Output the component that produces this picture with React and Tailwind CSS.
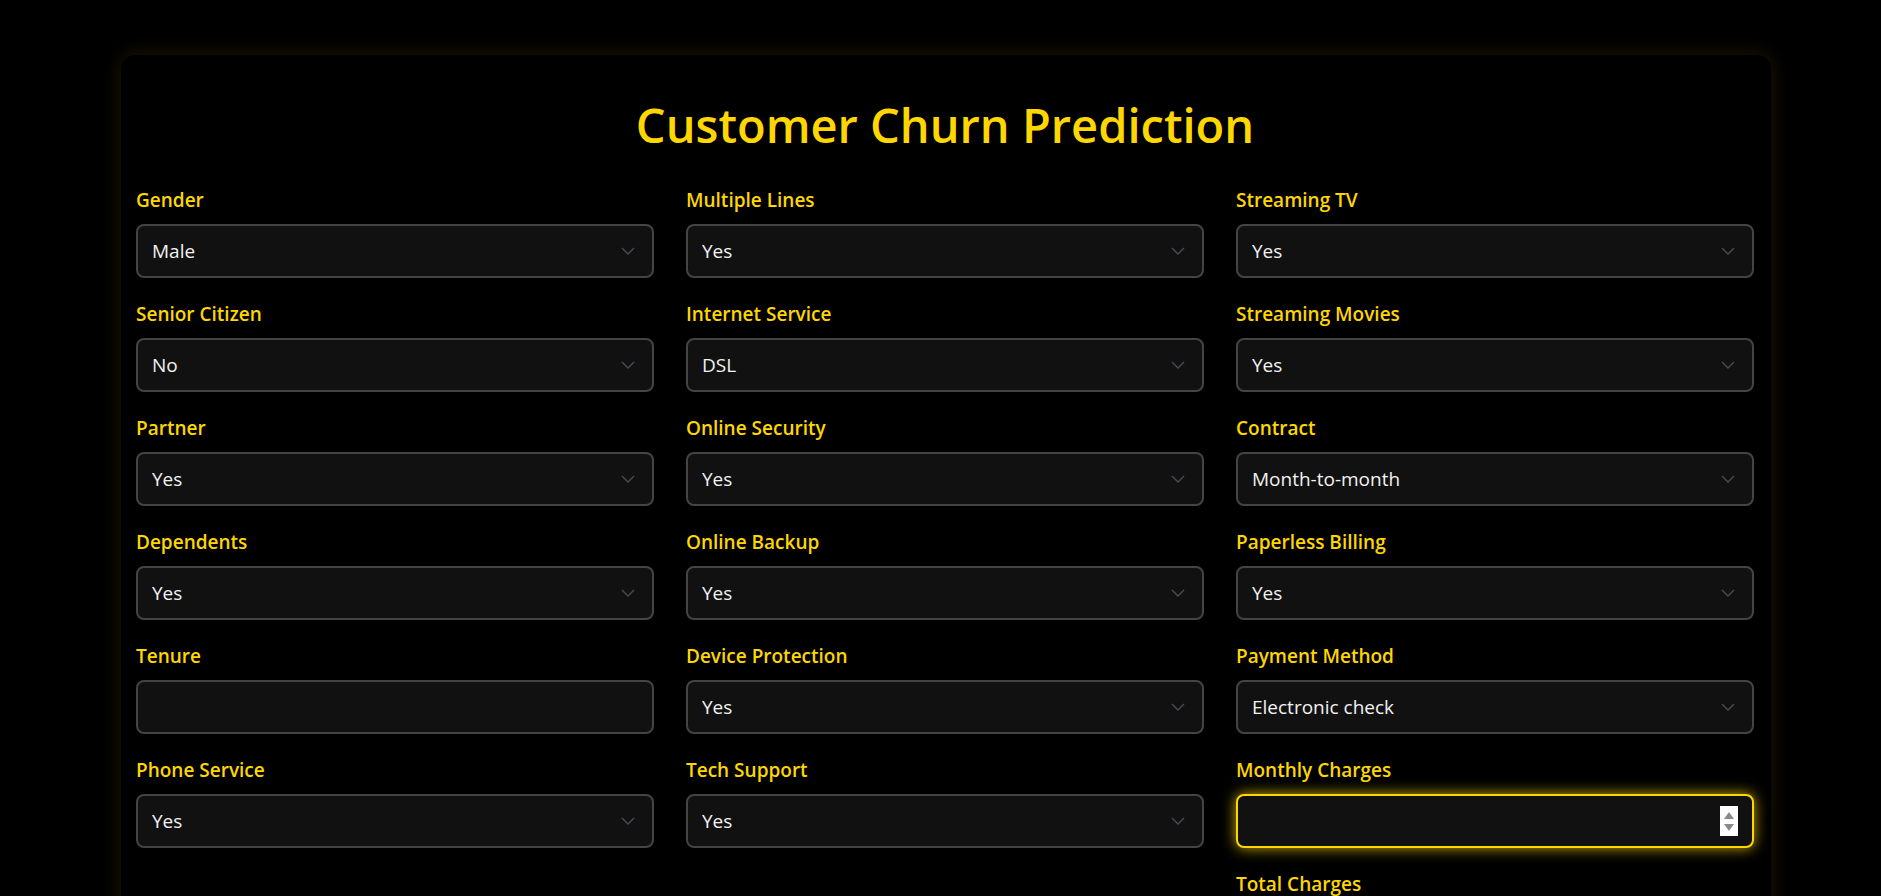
import { useState } from "react";

const columns = [
  [
    { label: "Gender", type: "select", value: "Male" },
    { label: "Senior Citizen", type: "select", value: "No" },
    { label: "Partner", type: "select", value: "Yes" },
    { label: "Dependents", type: "select", value: "Yes" },
    { label: "Tenure", type: "number" },
    { label: "Phone Service", type: "select", value: "Yes" },
  ],
  [
    { label: "Multiple Lines", type: "select", value: "Yes" },
    { label: "Internet Service", type: "select", value: "DSL" },
    { label: "Online Security", type: "select", value: "Yes" },
    { label: "Online Backup", type: "select", value: "Yes" },
    { label: "Device Protection", type: "select", value: "Yes" },
    { label: "Tech Support", type: "select", value: "Yes" },
  ],
  [
    { label: "Streaming TV", type: "select", value: "Yes" },
    { label: "Streaming Movies", type: "select", value: "Yes" },
    { label: "Contract", type: "select", value: "Month-to-month" },
    { label: "Paperless Billing", type: "select", value: "Yes" },
    { label: "Payment Method", type: "select", value: "Electronic check" },
    { label: "Monthly Charges", type: "number", focused: true },
    { label: "Total Charges", type: "number" },
  ],
];

function Chevron() {
  return (
    <svg
      width="14"
      height="8"
      viewBox="0 0 14 8"
      className="pointer-events-none absolute right-[19px] top-1/2 -translate-y-1/2"
    >
      <path d="M1 1l6 6 6-6" fill="none" stroke="#4b4b52" strokeWidth="1.4" />
    </svg>
  );
}

function Spinner() {
  return (
    <div className="pointer-events-none absolute right-[16px] top-1/2 flex h-[30px] w-[18px] -translate-y-1/2 flex-col items-center justify-center gap-[5px] bg-white">
      <svg width="10" height="7" viewBox="0 0 10 7">
        <path d="M5 0l5 7H0z" fill="#8a8a8a" />
      </svg>
      <svg width="10" height="7" viewBox="0 0 10 7">
        <path d="M0 0h10L5 7z" fill="#8a8a8a" />
      </svg>
    </div>
  );
}

function Field({ field }) {
  const [value, setValue] = useState(field.value ?? "");
  const base =
    "h-[54px] w-full rounded-[8px] bg-[#111111] pl-[14px] pr-[44px] text-[19px] text-[#f2f2f2] outline-none appearance-none";

  return (
    <div className="mb-[24px] flex flex-col">
      <label className="mb-[12px] text-[19px] font-semibold leading-[24px] text-[#ffd700]">
        {field.label}
      </label>
      <div className="relative">
        {field.type === "select" ? (
          <>
            <select
              value={value}
              onChange={(e) => setValue(e.target.value)}
              className={`${base} border-2 border-[#444444]`}
            >
              <option value={value}>{value}</option>
            </select>
            <Chevron />
          </>
        ) : field.focused ? (
          <>
            <input
              type="text"
              value={value}
              onChange={(e) => setValue(e.target.value)}
              className={`${base} border-2 border-[#ffd700] shadow-[0_0_14px_rgba(255,215,0,0.8)]`}
            />
            <Spinner />
          </>
        ) : (
          <input
            type="text"
            value={value}
            onChange={(e) => setValue(e.target.value)}
            className={`${base} border-2 border-[#444444]`}
          />
        )}
      </div>
    </div>
  );
}

export default function App() {
  return (
    <div
      className="min-h-screen overflow-hidden bg-black pt-[55px]"
      style={{ fontFamily: '"Open Sans", "Noto Sans", sans-serif' }}
    >
      <div className="ml-[121px] w-[1650px] rounded-[14px] bg-black pb-[40px] pl-[15px] pr-[17px] pt-[41px] shadow-[0_0_20px_rgba(255,215,0,0.12)]">
        <h1 className="mb-[34px] text-center text-[47px] font-semibold leading-[58px] text-[#ffd700]">
          Customer Churn Prediction
        </h1>
        <div className="grid grid-cols-3 gap-x-[32px]">
          {columns.map((col, i) => (
            <div key={i} className="flex flex-col">
              {col.map((f) => (
                <Field key={f.label} field={f} />
              ))}
            </div>
          ))}
        </div>
      </div>
    </div>
  );
}
